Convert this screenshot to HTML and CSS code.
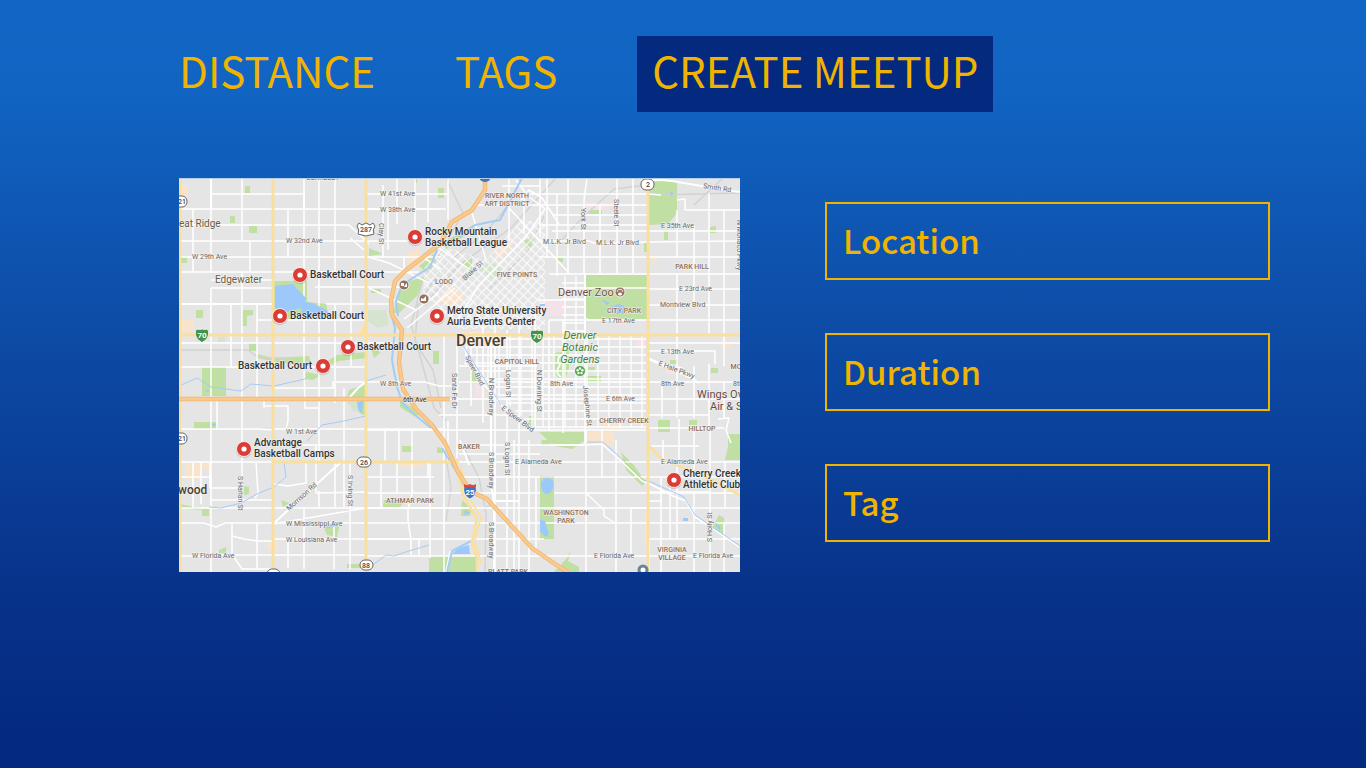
FILE: index.html
```html
<!DOCTYPE html>
<html lang="en">
<head>
<meta charset="utf-8">
<meta name="viewport" content="width=device-width, initial-scale=1">
<title>Create Meetup</title>
<link rel="stylesheet" href="styles.css">
</head>
<body>
<header class="header">
  <nav class="nav" aria-label="Main">
    <a class="nav-link" href="#distance">DISTANCE</a>
    <a class="nav-link" href="#tags">TAGS</a>
    <a class="nav-link nav-link-current" href="#create" aria-current="page">CREATE MEETUP</a>
  </nav>
</header>
<main class="content">
  <svg class="map" viewBox="0 0 561 394" role="img" aria-label="Map of basketball courts in Denver">
    <defs>
      <g id="pin">
        <circle cx="0" cy="1" r="8" fill="#777" opacity=".3"/>
        <circle r="7.500" fill="#db3c36" stroke="#fff" stroke-width=".8"/>
        <circle r="2.600" fill="#fff"/>
      </g>
      <g id="shield-70">
        <path d="M-5-6Q-3-5 0-6Q3-5 5-6L6.500-4Q7.500 4 0 7.500Q-7.500 4-6.500-4Z" fill="#43934a" stroke="#fff" stroke-width=".7"/>
        <text class="shield-light" y="3">70</text>
      </g>
      <pattern id="downtown" width="6.500" height="6.500" patternUnits="userSpaceOnUse" patternTransform="rotate(43)">
        <path d="M0 0H6.500M0 0V6.500" stroke="#fff" stroke-width="2.400"/>
      </pattern>
      <pattern id="blocks" width="11" height="8" patternUnits="userSpaceOnUse">
        <path d="M0 1H11M1 0V8" stroke="#fff" stroke-width="1.300"/>
      </pattern>
    </defs>

    <rect width="561" height="394" fill="#e5e5e5"/>

    <!-- built-up areas -->
    <g fill="#f8e3cd">
      <path d="M0 8H9V30H0ZM0 141H15V154H0ZM6 285H30V292H22V301H6ZM88 364H99V372H88ZM229 75L240 70V92L228 84ZM315 75L330 62L334 67L320 80ZM258 121L275 109L286 120L272 130ZM280 153H320V166H280ZM407 254H435V268H407ZM543 163H552V170H543ZM472 79H478V84H472ZM466 330H471V372H466ZM424 243H440V252H424ZM179 152L187 145V158H179ZM218 284H242V289H218Z"/>
    </g>
    <g fill="#f5e2e8">
      <path d="M407 25H430V32H407ZM361 123H387V138H361ZM487 188H500V196H487ZM296 206H304V219H296ZM457 160H466V170H457Z"/>
    </g>

    <!-- parks -->
    <g fill="#c0dfa3">
      <path d="M66 8H71V15H66ZM51 38H56V45H51ZM70 48H78V55H70ZM0 79H8V85H0ZM95 103H128V124L148 126V133H137V141H95ZM17 132H24V140H17ZM63 132H74V137L68 138V148H63Z"/>
      <path d="M70 165H78V173H70ZM23 189H47V218H23ZM15 244H38V251H15ZM77 176L95 180L130 178L133 189L125 188L98 184L77 180ZM147 184L158 177L187 174V180L160 183L150 188ZM127 194L142 197L134 202L126 201ZM170 212L186 206V238L173 230L167 222Z"/>
      <path d="M65 308L70 309V316L65 317ZM23 331H30V338H23ZM0 326L22 330V332L0 330ZM102 322L110 325L104 329ZM150 343L160 349L158 359L148 357L145 350ZM40 372L47 369V375H40ZM168 386H181V390H168Z"/>
      <path d="M259 10H265V20H259ZM235 0H238V5H235ZM192 111H202V115H192ZM190 70L204 76L190 78ZM345 63L353 59V68L347 70ZM282 85L293 80V94L286 91ZM192 170L202 174L195 180ZM254 173H260V186H254ZM291 190L298 194V205H292ZM350 238H354V248H350Z"/>
      <path d="M469 3H498V35L489 46L469 47ZM410 32H423V36H410ZM485 53H489V62H485ZM465 65H469V74H465ZM531 49L537 48V55H531ZM377 80H384V84H377ZM406 97H468V141H410L406 138Z"/>
      <path d="M375 175L390 173V190L386 202L378 199L375 190ZM407 198H422V205H407ZM409 189H416V194H409ZM491 182H499V186H491ZM532 190H539V195H532ZM479 242H491V254H479ZM510 242H518V247H510ZM549 256H561V282H546L549 269ZM360 254H405V263L393 271L375 268Z"/>
      <path d="M361 300H375V361H361ZM223 268H234V274H223ZM258 269L264 270V275H258ZM283 322L293 331L291 338H282ZM205 322H226L220 331L204 329ZM250 378H297V394H250ZM363 262H375L370 267H362ZM540 337L545 340V358L533 350ZM447 292L463 308L467 304L454 286L442 274ZM388 380L392 372L389 383L400 389V394H375Z"/>
      <path d="M248 82L258 72L255 88L247 94L240 88ZM225 105L247 98L238 118L220 135H214L219 117ZM267 63L298 45L291 54L264 73ZM221 222L245 236L235 238L221 229Z"/>
    </g>
    <g fill="#d6e4cf">
      <path d="M189 132H207L210 147L199 150L189 143ZM300 92L312 83L323 91L314 101ZM240 120L247 113L249 128H240ZM167 223H182V232L175 234ZM39 159H46V164H39Z"/>
    </g>

    <!-- railways -->
    <g class="rail">
      <path d="M267 0L284 35L266 67L243 105L232 147L240 174L255 230L267 242M342 0C327 44 290 67 264 88L239 127L236 164L254 192L262 230M377 0L332 50L280 87L251 120M561 15L475 17L468 7L435 11L405 38L380 65M544 0L515 27M365 38L348 75L310 111M281 262L300 300L307 335L306 394M264 262L272 310L267 343M316 325L304 331M0 172H69L80 180H111"/>
    </g>

    <!-- street grid -->
    <path d="M245 91L263 68L307 82L342 43H366V151H280L244 117Z" fill="url(#downtown)" opacity=".8"/>
    <path d="M288 157H467V250H355L285 186ZM383 98H406V156H383Z" fill="url(#blocks)"/>
    <g class="street">
      <path d="M32 16H125V31M0 31H267M0 47H94M94 47H170L190 66M0 63H155M94 63H240M0 79H262M0 94H240M32 102H95M32 110H94M136 109H230M0 126H94M147 126H210M78 142H187M0 165H217M0 189H94M125 189H187M94 210H154V204H187M125 230H140M85 228H109V243L107 251M0 251H78L94 252M94 251H265M94 267H187"/>
      <path d="M32 16V94M32 110V394M14 31V94M63 0V63M63 94V300M71 63V94M109 31V79M125 0V189L126 230M140 0V283M156 0V94M172 94V188M156 125V225M52 126V188M78 126V157M78 157V223M38 221V251M85 223V230M165 210V330M137 268V315L187 314M127 284V305L109 308L95 306M14 285V330M22 284V326M31 284V310"/>
      <path d="M0 299H32V310H64M32 322H94M0 330H295M0 345H25L37 349L46 345H94M94 345H470M94 361H365M0 378H30L36 377H187M187 378H470M53 345V376L63 391H94M53 358L65 361L78 363H94M77 284L79 315L76 320M78 345V391M187 330L94 346M109 362V390M125 330V391M155 345V391M171 283V391M156 284V330M0 284H94M140 313V330"/>
      <path d="M187 16H270M187 31H260M204 7V80M218 0V46M236 0V51M249 0V44M209 31V72M225 94V79M269 0V42M293 35L307 82M257 68L296 95M242 78L262 91M190 110L237 132M186 78L210 85L250 105M171 60L185 72M225 141L260 115M228 150L276 110"/>
      <path d="M298 27H470M311 16H470M323 8H361M330 0V63M345 15V55M361 0V59M330 30L390 95M342 22L350 12L363 20L380 46M360 47H468M368 0V80M378 16V98M389 0V96M373 37H468M373 53H561M360 63H410L418 66L467 64L561 63M360 79H561M370 96H561M380 110H468L473 111H561M360 122H407M470 127H561M470 142H561M370 142H561"/>
      <path d="M408 0L405 22V96M438 0V96M421 27V95M454 0V95M498 32V79M498 47V79M515 47V96M530 15V127M545 32V127M498 95V157M515 95V127M530 126V157M545 126V157M482 17L470 16M498 22L506 21V32H561"/>
      <path d="M187 204H246L260 208H280M265 157V394M278 157V280M292 155V228M304 147V245M316 142V394M328 152V394M340 142V394M356 132V252M370 142V252M384 142V255M280 188H358M280 204H468M263 221H468M260 237H334M245 252H467M280 267H405M280 276H361M187 284H361M280 299H361M280 315H361M280 330H470M187 299H255M187 315H282M187 330H283M187 361H295"/>
      <path d="M282 165L304 205L323 228L356 252M206 251V284M220 251V284M233 251V315M249 284V300M202 284V330M218 284V315M234 312L229 331V342L232 362V377M251 284V380M294 362L271 374L267 394M240 362V378M350 262V394M335 262V394M357 299V376M269 243V284"/>
      <path d="M406 157V267L423 266L440 281L463 303L471 306L496 319L507 323L516 339L533 350L560 369M373 267H405M375 284H561M375 299H561M375 315H561M407 315L425 332V338L437 346V394M407 267V394M423 252V300M437 262V347M437 284V299M467 314H530M452 330H561M470 345H561M452 331V377M470 361H561M470 378H561M470 323H482M482 299V361M491 299V361M498 284V361M482 361V394"/>
      <path d="M470 165H561M470 181L490 188L503 190L512 200L520 205M470 204H561M470 173H536V186M530 186V204M545 157V188M483 204V240M498 157V240M515 188V240M530 204V252M545 204V240M470 221H561M470 237H530M470 250H545M500 241V284M531 252V394M546 284V330M515 252V300M515 315V394M470 268H520M470 394V361M545 345V394M484 262V284M539 241L550 240L547 252L552 265"/>
    </g>
    <g class="avenue">
      <path d="M32 0V31M0 126H94M94 346L162 284M187 252H270M312 157V305L315 325V394M406 96V157M469 3C492-1 515 9 561 14M470 181L512 200M170 220L179 210L187 204M281 262L290 287M316 323H340M316 266V320M407 252V265"/>
    </g>
    <path d="M337 2L349 18L366 31L346 60L300 107L276 146" class="street"/>

    <!-- water -->
    <g fill="#9cc8fc">
      <path d="M96 108L114 106L119 112L127 120L126 124L133 125L148 132L150 136L142 141H124L122 130L108 134L96 130Z"/>
      <path d="M422 121L431 125L428 127ZM431 129L440 126L447 129L445 136H435ZM491 14L494 15L493 19ZM27 212L31 213L27 214ZM33 245L37 246L34 249ZM178 224L184 223L183 236L179 231ZM286 332L291 335L285 337ZM206 322L220 323L214 326ZM504 340H509V343H504ZM279 370L290 367L291 376L273 376ZM147 349L156 345L159 348L148 350ZM535 343L542 350L540 352ZM361 126H366V128H361Z"/>
      <path d="M362 304Q368 296 374 303Q376 314 368 316Q361 314 362 304ZM361 341L366 343L370 356L367 359L361 354Z"/>
    </g>
    <g class="river">
      <path class="river-wide" d="M343 0L321 42L296 47L280 59"/>
      <path class="river-wide" d="M258 72L251 89L223 107L217 123L219 138"/>
      <path class="river-wide" d="M211 132L216 150L213 182L218 209L224 226L236 237L252 250M263 270L276 291L290 317M292 363L273 373L268 394"/>
      <path d="M0 208L18 200L32 209L62 213L72 206L95 208L126 201M187 203L207 197M187 238L165 243L143 247L128 263M105 285L107 299L95 309L80 315L62 325L42 330L30 329M195 386L207 377L215 378L230 373L250 367M408 264L424 264L442 280L464 302L472 304L505 319L516 337L535 350L561 368M284 168L322 227"/>
    </g>

    <!-- highways -->
    <g class="highway">
      <path d="M1 0V394M94 0V394M187 0V394M469 6V394M0 157H561M94 284H280M470 268L484 282L519 295L561 317M182 157L187 147"/>
      <path d="M278 290L284 317L298 341L293 364L298 380V394"/>
    </g>
    <path class="highway-thin" d="M282 287L287 315L302 339L296 362L302 385"/>
    <path class="freeway-edge" d="M0 221H271M306 0V12L293 32L273 44L261 66L226 93L216 103L212 123L213 137L223 152L220 185L224 211L237 231L253 247L266 265L278 292L291 313L308 321L329 344L353 370L376 386L389 394"/>
    <path class="freeway" d="M0 221H271M306 0V12L293 32L273 44L261 66L226 93L216 103L212 123L213 137L223 152L220 185L224 211L237 231L253 247L266 265L278 292L291 313L308 321L329 344L353 370L376 386L389 394"/>
    <path d="M384 176Q376 180 381 187Q375 195 382 199" class="street"/>

    <!-- street names -->
    <g class="label">
      <text x="107" y="65">W 32nd Ave</text>
      <text x="13" y="81">W 29th Ave</text>
      <text x="201" y="18">W 41st Ave</text>
      <text x="201" y="34">W 38th Ave</text>
      <text x="364" y="66">M.L.K. Jr Blvd</text>
      <text x="417" y="67">M.L.K. Jr Blvd</text>
      <text x="482" y="50">E 35th Ave</text>
      <text x="500" y="113">E 23rd Ave</text>
      <text x="481" y="129">Montview Blvd</text>
      <text x="423" y="145">E 17th Ave</text>
      <text x="482" y="176">E 13th Ave</text>
      <text x="371" y="208">8th Ave</text>
      <text x="482" y="208">8th Ave</text>
      <text x="554" y="208">8th</text>
      <text x="427" y="223">E 6th Ave</text>
      <text x="201" y="208">W 8th Ave</text>
      <text x="107" y="256">W 1st Ave</text>
      <text x="107" y="348">W Mississippi Ave</text>
      <text x="107" y="364">W Louisiana Ave</text>
      <text x="13" y="380">W Florida Ave</text>
      <text x="336" y="286">E Alameda Ave</text>
      <text x="482" y="286">E Alameda Ave</text>
      <text x="415" y="380">E Florida Ave</text>
      <text x="514" y="380">E Florida Ave</text>
      <text transform="translate(524 10) rotate(9)">Smith Rd</text>
      <text transform="translate(200 45) rotate(90)">Clay St</text>
      <text transform="translate(435 21) rotate(90)">Steele St</text>
      <text transform="translate(402 30) rotate(90)">York St</text>
      <text transform="translate(558 42) rotate(90)">N Monaco Pkwy</text>
      <text transform="translate(286 103) rotate(-43)">Blake St</text>
      <text transform="translate(273 195) rotate(90)">Santa Fe Dr</text>
      <text transform="translate(286 179) rotate(62)">Speer Blvd</text>
      <text transform="translate(310 200) rotate(90)">N Broadway</text>
      <text transform="translate(327 192) rotate(90)">Logan St</text>
      <text transform="translate(358 192) rotate(90)">N Downing St</text>
      <text transform="translate(322 231) rotate(37)">E Speer Blvd</text>
      <text transform="translate(404 208) rotate(84)">Josephine St</text>
      <text transform="translate(479 187) rotate(21)">E Hale Pkwy</text>
      <text transform="translate(59 298) rotate(90)">S Harlan St</text>
      <text transform="translate(110 333) rotate(-42)">Morrison Rd</text>
      <text transform="translate(169 297) rotate(90)">S Irving St</text>
      <text transform="translate(310 274) rotate(90)">S Broadway</text>
      <text transform="translate(310 344) rotate(90)">S Broadway</text>
      <text transform="translate(326 264) rotate(90)">S Logan St</text>
      <text transform="translate(533 364) rotate(-90)">S Holly St</text>
      <text class="label-freeway" x="224" y="224">6th Ave</text>
    </g>

    <!-- districts -->
    <g class="label label-district">
      <text x="144" y="2">BERKELEY</text>
      <text x="328" y="20">RIVER NORTH</text>
      <text x="328" y="28">ART DISTRICT</text>
      <text x="265" y="106">LODO</text>
      <text x="338" y="99">FIVE POINTS</text>
      <text x="513" y="91">PARK HILL</text>
      <text x="445" y="135">CITY PARK</text>
      <text x="338" y="186">CAPITOL HILL</text>
      <text x="445" y="245">CHERRY CREEK</text>
      <text x="523" y="253">HILLTOP</text>
      <text x="290" y="271">BAKER</text>
      <text x="231" y="325">ATHMAR PARK</text>
      <text x="387" y="337">WASHINGTON</text>
      <text x="387" y="345">PARK</text>
      <text x="493" y="374">VIRGINIA</text>
      <text x="493" y="382">VILLAGE</text>
      <text x="329" y="396">PLATT PARK</text>
      <text x="557" y="191">MO</text>
    </g>

    <!-- towns and places -->
    <g class="label label-place">
      <text x="0" y="49">eat Ridge</text>
      <text x="36" y="105">Edgewater</text>
      <text class="label-zoo" x="379" y="118">Denver Zoo</text>
      <text class="label-shop" x="518" y="220">Wings Ov</text>
      <text class="label-shop" x="531" y="232">Air &amp; S</text>
      <text class="label-town" x="-1" y="316">wood</text>
      <text class="label-city" x="277" y="168">Denver</text>
    </g>
    <g class="label label-garden">
      <text x="401" y="161">Denver</text>
      <text x="401" y="173">Botanic</text>
      <text x="401" y="185">Gardens</text>
    </g>

    <!-- place icons -->
    <g stroke="#fff" stroke-width=".8">
      <circle cx="441" cy="114" r="5" fill="#94715f"/>
      <circle cx="225" cy="107" r="5" fill="#94715f"/>
      <circle cx="245" cy="121" r="5" fill="#94715f"/>
      <circle cx="401" cy="193" r="5.500" fill="#52a447"/>
    </g>
    <g fill="#fff">
      <ellipse cx="441" cy="116" rx="2" ry="1.500"/>
      <circle cx="438.500" cy="113" r=".8"/><circle cx="440" cy="111.500" r=".8"/><circle cx="442" cy="111.500" r=".8"/><circle cx="443.500" cy="113" r=".8"/>
      <path d="M222 105H225V108H222ZM226 107L228 105V109H225Z"/>
      <path d="M242 123V120L244 121L247 118V123Z"/>
      <circle cx="401" cy="190.500" r="1.200"/><circle cx="398.600" cy="192.300" r="1.200"/><circle cx="403.400" cy="192.300" r="1.200"/><circle cx="399.500" cy="195" r="1.200"/><circle cx="402.500" cy="195" r="1.200"/>
    </g>

    <!-- route shields -->
    <use href="#shield-70" x="23" y="157"/>
    <use href="#shield-70" x="358" y="158"/>
    <g transform="translate(291 313)">
      <path d="M-6-5H6Q8 4 0 8Q-8 4-6-5Z" fill="#3c74bd" stroke="#fff" stroke-width=".7"/>
      <path d="M-6-7Q-3-5 0-7Q3-5 6-7V-4H-6Z" fill="#d64a48"/>
      <text class="shield-light" y="4">25</text>
    </g>
    <circle cx="306" cy="-2" r="6" fill="#3c74bd"/>
    <g class="shield-box">
      <rect x="-6" y="18" width="14" height="11" rx="5"/>
      <rect x="-6" y="255" width="14" height="11" rx="5"/>
      <rect x="462" y="1" width="13" height="11" rx="5"/>
      <path d="M180 45L183 47L187 45L191 47L194 45L196 48Q193 52 195 56L191 57L187 58L183 57L179 56Q181 52 178 48Z"/>
      <rect x="178" y="279" width="14" height="10" rx="5"/>
      <rect x="181" y="382" width="13" height="10" rx="5"/>
      <rect x="88" y="391" width="13" height="10" rx="5"/>
    </g>
    <g class="shield-text">
      <text x="3" y="26">21</text>
      <text x="3" y="263">21</text>
      <text x="469" y="9">2</text>
      <text x="187" y="54">287</text>
      <text x="185" y="287">26</text>
      <text x="187" y="390">88</text>
    </g>
    <circle cx="464" cy="392" r="4" fill="#fff" stroke="#688695" stroke-width="3"/>

    <!-- courts -->
    <use href="#pin" x="236" y="59"/>
    <use href="#pin" x="121" y="97"/>
    <use href="#pin" x="101" y="138"/>
    <use href="#pin" x="169" y="169"/>
    <use href="#pin" x="144" y="188"/>
    <use href="#pin" x="258" y="138"/>
    <use href="#pin" x="65" y="271"/>
    <use href="#pin" x="495" y="302"/>
    <g class="label label-pin">
      <text x="246" y="57">Rocky Mountain</text>
      <text x="246" y="68">Basketball League</text>
      <text x="131" y="100">Basketball Court</text>
      <text x="111" y="141">Basketball Court</text>
      <text x="178" y="172">Basketball Court</text>
      <text x="59" y="191">Basketball Court</text>
      <text x="268" y="136">Metro State University</text>
      <text x="268" y="147">Auria Events Center</text>
      <text x="75" y="268">Advantage</text>
      <text x="75" y="279">Basketball Camps</text>
      <text x="504" y="299">Cherry Creek</text>
      <text x="504" y="310">Athletic Club</text>
    </g>
    <rect width="561" height="1" fill="#b9cfe8"/>
  </svg>

  <form class="form">
    <input class="field" type="text" name="location" placeholder="Location" aria-label="Location">
    <input class="field" type="text" name="duration" placeholder="Duration" aria-label="Duration">
    <input class="field" type="text" name="tag" placeholder="Tag" aria-label="Tag">
  </form>
</main>
</body>
</html>
```

FILE: styles.css
```css
* {
  box-sizing: border-box;
}

body {
  margin: 0;
  min-height: 100vh;
  background: linear-gradient(#1166c5 0%, #1164c2 12%, #0c48a2 48%, #08338b 76%, #042a80 96%, #042a80 100%);
  font-family: "Noto Sans CJK JP", "Noto Sans", sans-serif;
  color: #f0b400;
}

.header {
  padding: 36px 96px 0 179px;
}

.nav {
  display: flex;
  align-items: center;
  gap: 80px;
}

.nav-link {
  padding-bottom: 8px;
  font-size: 42px;
  line-height: 68px;
  color: inherit;
  text-decoration: none;
  white-space: nowrap;
}

.nav-link-current {
  padding-right: 15px;
  padding-left: 15px;
  background: #042a80;
}

.content {
  display: grid;
  grid-template-columns: 561fr 445fr;
  column-gap: 85px;
  align-items: start;
  padding: 66px 96px 66px 179px;
}

.map {
  display: block;
  width: 100%;
  overflow: hidden;
}

.form {
  display: grid;
  row-gap: 53px;
  padding-top: 24px;
}

.field {
  width: 100%;
  height: 78px;
  padding: 0 16px 2px;
  border: 2px solid #f0b400;
  border-radius: 0;
  background: transparent;
  color: #f0b400;
  font-family: inherit;
  font-size: 33px;
  font-weight: 500;
}

.field::placeholder {
  color: #f0b400;
  opacity: 1;
}

.street,
.avenue,
.rail,
.river,
.highway,
.highway-thin,
.freeway,
.freeway-edge {
  fill: none;
  stroke-linejoin: round;
}

.street {
  stroke: #fff;
  stroke-width: 1.5px;
}

.avenue {
  stroke: #fff;
  stroke-width: 2px;
}

.rail {
  stroke: #d2d2d2;
  stroke-width: 1.4px;
}

.river {
  stroke: #a5ccf5;
  stroke-width: 1px;
}

.river-wide {
  stroke-width: 2px;
}

.highway {
  stroke: #fbdf9d;
  stroke-width: 2.8px;
}

.highway-thin {
  stroke: #fbdf9d;
  stroke-width: 1.6px;
}

.freeway-edge {
  stroke: #efb66c;
  stroke-width: 4.4px;
}

.freeway {
  stroke: #fbc98d;
  stroke-width: 2.8px;
}

.label {
  font-family: Roboto, sans-serif;
  font-size: 7px;
  fill: #666;
  stroke: #f4f4f4;
  stroke-width: 1px;
  paint-order: stroke;
}

.label-freeway {
  fill: #5c4520;
  font-weight: 500;
}

.label-district {
  fill: #8d6e55;
  font-weight: 500;
  text-anchor: middle;
}

.label-place {
  font-size: 10px;
  fill: #6b5b3e;
}

.label-zoo {
  font-size: 11px;
  fill: #75513e;
}

.label-shop {
  font-size: 11px;
  fill: #66483b;
}

.label-town {
  font-size: 12px;
  font-weight: 500;
  fill: #4c402a;
}

.label-city {
  font-size: 16px;
  font-weight: 500;
  fill: #4c402a;
}

.label-garden {
  font-size: 11px;
  font-style: italic;
  fill: #388536;
  text-anchor: middle;
}

.label-pin {
  font-size: 10px;
  font-weight: 500;
  fill: #333;
}

.shield-box {
  fill: #fff;
  stroke: #666;
  stroke-width: 1px;
}

.shield-text,
.shield-light {
  font-family: Roboto, sans-serif;
  font-size: 7px;
  font-weight: 500;
  fill: #444;
  text-anchor: middle;
}

.shield-light {
  font-size: 8px;
  font-weight: 700;
  fill: #fff;
}
```
